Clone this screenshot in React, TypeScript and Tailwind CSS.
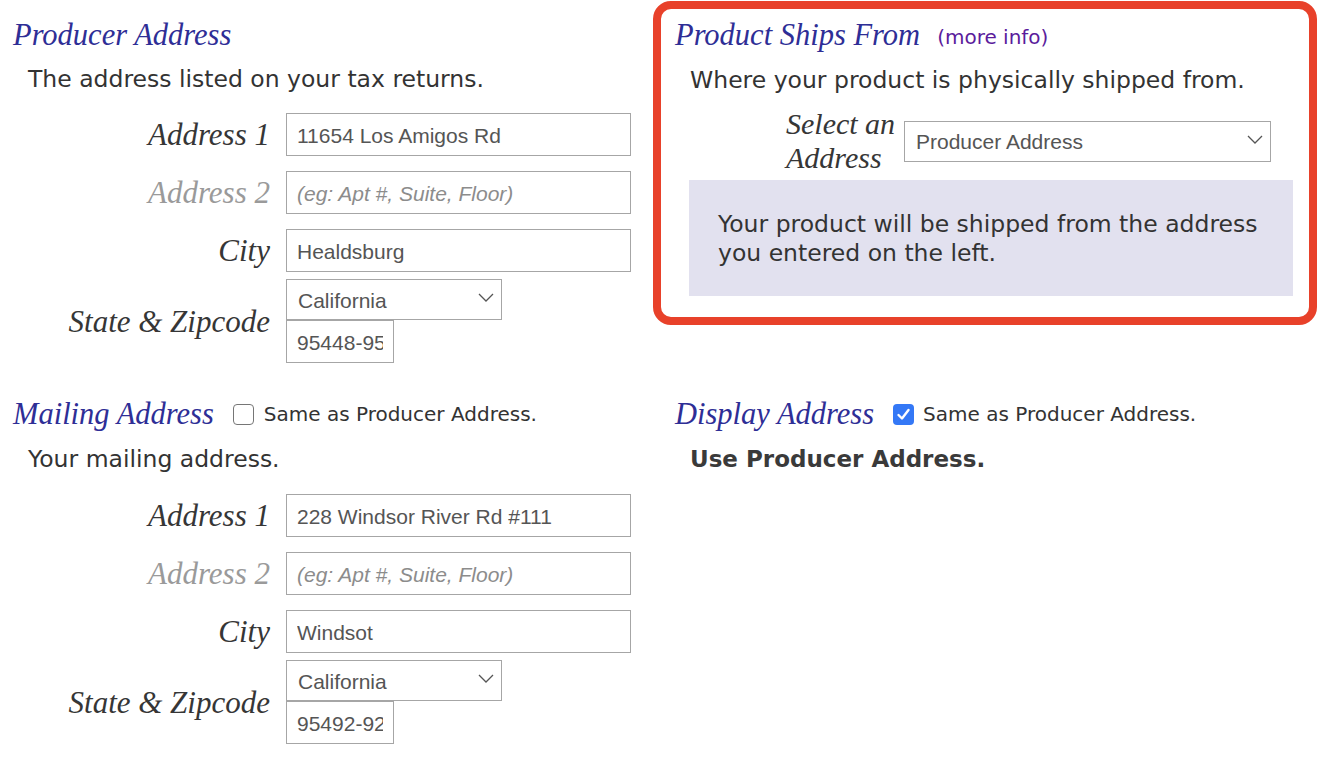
import React from "react";

const serif = "font-['Liberation_Serif',serif] italic";
const sans = "font-['DejaVu_Sans',sans-serif]";
const arial = "font-['Liberation_Sans',Arial,sans-serif]";

function Chevron() {
  return (
    <svg width="16" height="9" viewBox="0 0 16 9" className="pointer-events-none absolute right-[8px] top-[14px]">
      <polyline points="1,1 8,8 15,1" fill="none" stroke="#555" strokeWidth="1.3" />
    </svg>
  );
}

function SelectBox({ value, w, h }: { value: string; w: string; h: string }) {
  return (
    <div className={`relative ${w} ${h}`}>
      <select
        defaultValue={value}
        className={`appearance-none w-full h-full border border-[#a6a6a6] bg-white pl-[11px] pt-[2px] text-[21px] text-[#555] ${arial} outline-none`}
      >
        <option>{value}</option>
      </select>
      <Chevron />
    </div>
  );
}

function TextInput({ value, placeholder, w = "w-[345px]", h = "h-[43px]" }: { value?: string; placeholder?: string; w?: string; h?: string }) {
  return (
    <input
      defaultValue={value}
      placeholder={placeholder}
      className={`${w} ${h} border border-[#a6a6a6] bg-white px-[10px] pt-[3px] text-[21px] text-[#555] ${arial} outline-none placeholder:italic placeholder:text-[#8c8c8c]`}
    />
  );
}

function Label({ children, muted }: { children: React.ReactNode; muted?: boolean }) {
  return (
    <div className={`w-[257px] text-right ${serif} text-[31px] leading-[31px] ${muted ? "text-[#9a9a9a]" : "text-[#363636]"}`}>
      {children}
    </div>
  );
}

function AddressForm({ a1, city, zip }: { a1: string; city: string; zip: string }) {
  return (
    <div className="flex flex-col gap-[15px]">
      <div className="flex items-center gap-[16px]">
        <Label>Address 1</Label>
        <TextInput value={a1} />
      </div>
      <div className="flex items-center gap-[16px]">
        <Label muted>Address 2</Label>
        <TextInput placeholder="(eg: Apt #, Suite, Floor)" />
      </div>
      <div className="flex items-center gap-[16px] -mb-[8px]">
        <Label>City</Label>
        <TextInput value={city} />
      </div>
      <div className="flex items-center gap-[16px]">
        <Label>State &amp; Zipcode</Label>
        <div className="flex flex-col">
          <SelectBox value="California" w="w-[216px]" h="h-[41px]" />
          <TextInput value={zip} w="w-[108px]" h="h-[43px]" />
        </div>
      </div>
    </div>
  );
}

function Checkbox({ checked }: { checked?: boolean }) {
  if (checked) {
    return (
      <span className="flex h-[21px] w-[21px] items-center justify-center rounded-[4px] bg-[#3478f6]">
        <svg width="15" height="15" viewBox="0 0 15 15">
          <polyline points="2.5,8 6,11.5 12.5,3" fill="none" stroke="#fff" strokeWidth="2.4" strokeLinecap="round" strokeLinejoin="round" />
        </svg>
      </span>
    );
  }
  return <span className="block h-[21px] w-[21px] rounded-[4px] border-[1.5px] border-[#767676] bg-white" />;
}

const headingCls = `${serif} text-[30.5px] leading-[30px] h-[30px] text-[#2e2e96] whitespace-nowrap`;

export default function App() {
  return (
    <div className="w-[1318px] h-[762px] overflow-hidden bg-white grid grid-cols-[653px_665px] grid-rows-[384px_1fr]">
      {/* Producer Address */}
      <div className="pl-[13px] pt-[20px]">
        <div className={headingCls}>Producer Address</div>
        <div className={`${sans} ml-[15px] mt-[15px] text-[23.5px] leading-[28px] text-[#333]`}>
          The address listed on your tax returns.
        </div>
        <div className="mt-[20px]">
          <AddressForm a1="11654 Los Amigos Rd" city="Healdsburg" zip="95448-9530" />
        </div>
      </div>

      {/* Product Ships From */}
      <div className="pt-[1px]">
        <div className="w-[664px] h-[324px] rounded-[18px] border-[8px] border-[#e8412a] pl-[14px] pt-[11px]">
          <div className="flex items-center h-[30px]">
            <span className={headingCls}>Product Ships From</span>
            <span className={`${sans} ml-[17px] pt-[4px] text-[20px] text-[#5b1c9c]`}>(more info)</span>
          </div>
          <div className={`${sans} ml-[15px] mt-[16px] text-[23.5px] leading-[28px] text-[#333]`}>
            Where your product is physically shipped from.
          </div>
          <div className="mt-[14px] flex items-center h-[66px]">
            <div className={`ml-[111px] w-[118px] ${serif} text-[30px] leading-[34px] text-[#363636] whitespace-nowrap`}>
              Select an
              <br />
              Address
            </div>
            <SelectBox value="Producer Address" w="w-[367px]" h="h-[41px]" />
          </div>
          <div className={`ml-[14px] mt-[6px] w-[604px] h-[116px] bg-[#e2e1ef] pl-[29px] pt-[30px] ${sans} text-[23.5px] leading-[29px] text-[#333]`}>
            Your product will be shipped from the address
            <br />
            you entered on the left.
          </div>
        </div>
      </div>

      {/* Mailing Address */}
      <div className="pl-[13px] pt-[15px]">
        <div className="flex items-center h-[30px]">
          <span className={headingCls}>Mailing Address</span>
          <span className="ml-[19px]"><Checkbox /></span>
          <span className={`${sans} ml-[10px] text-[20px] text-[#333]`}>Same as Producer Address.</span>
        </div>
        <div className={`${sans} ml-[15px] mt-[16px] text-[23.5px] leading-[28px] text-[#333]`}>
          Your mailing address.
        </div>
        <div className="mt-[21px]">
          <AddressForm a1="228 Windsor River Rd #111" city="Windsot" zip="95492-9231" />
        </div>
      </div>

      {/* Display Address */}
      <div className="pl-[22px] pt-[15px]">
        <div className="flex items-center h-[30px]">
          <span className={headingCls}>Display Address</span>
          <span className="ml-[19px]"><Checkbox checked /></span>
          <span className={`${sans} ml-[9px] text-[20px] text-[#333]`}>Same as Producer Address.</span>
        </div>
        <div className={`${sans} ml-[15px] mt-[16px] text-[23px] leading-[28px] font-bold text-[#3a3a3a]`}>
          Use Producer Address.
        </div>
      </div>
    </div>
  );
}
